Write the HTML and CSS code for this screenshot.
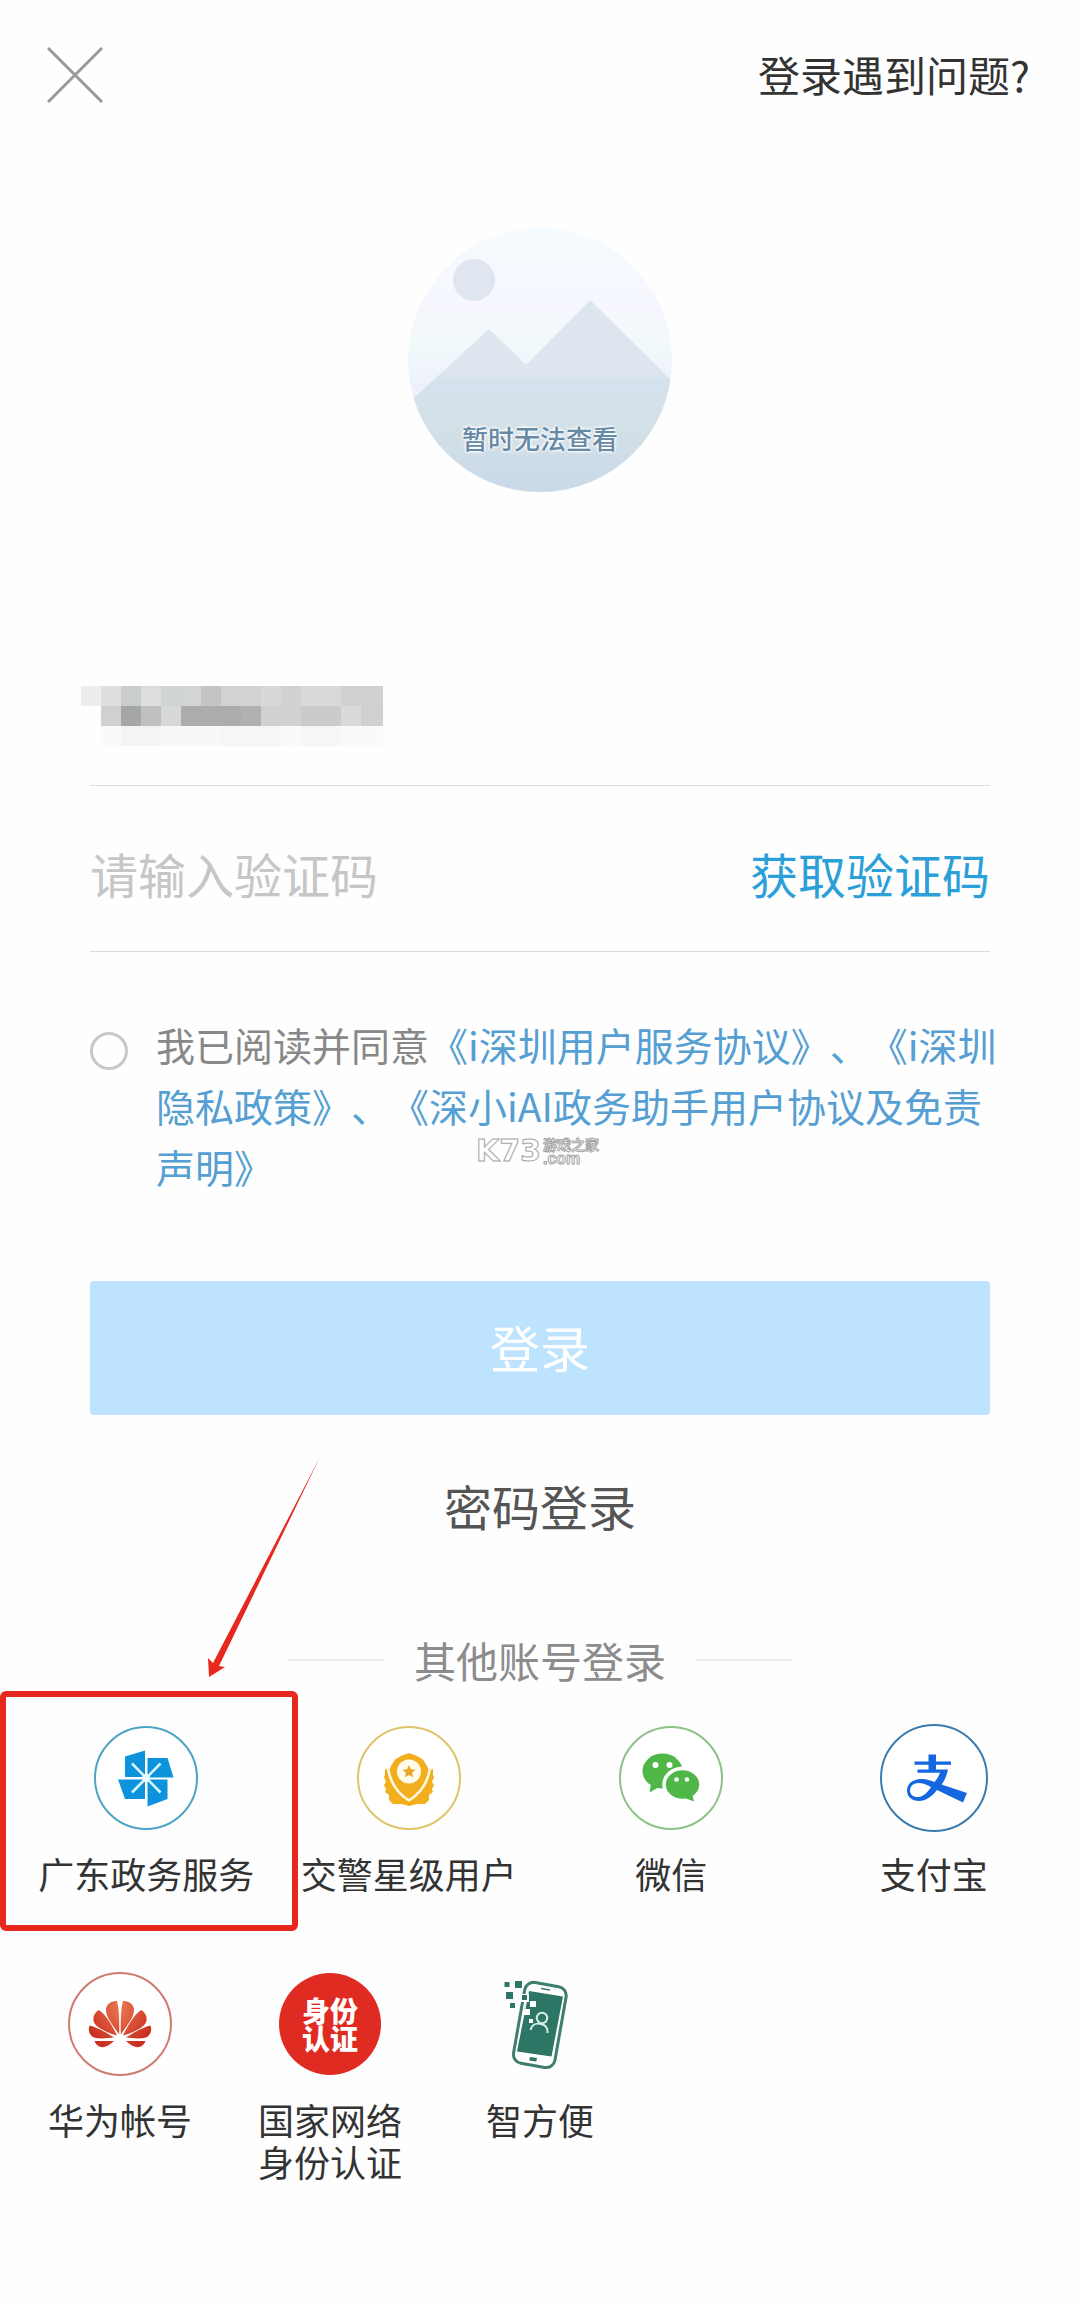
FILE: index.html
```html
<!DOCTYPE html>
<html lang="zh-CN">
<head>
    <meta charset="UTF-8">
    <meta name="viewport" content="width=device-width, initial-scale=1.0">
    <title>登录</title>
    <link rel="stylesheet" href="styles.css">
</head>
<body>
    <header class="topbar">
        <button type="button" class="close-btn" aria-label="关闭">
            <svg viewBox="0 0 56 56" fill="none" stroke="#999" stroke-width="3"><path d="M1 1l54 54M55 1L1 55"/></svg>
        </button>
        <a href="#" class="help-link">登录遇到问题?</a>
    </header>

    <!-- Avatar placeholder -->
    <div class="avatar">
        <svg viewBox="0 0 264 264">
            <defs>
                <clipPath id="avatarClip"><circle cx="132" cy="132" r="132"/></clipPath>
                <linearGradient id="sky" x1="0" y1="0" x2="0" y2="1">
                    <stop offset="0" stop-color="#f5fbff"/>
                    <stop offset="0.3" stop-color="#f6f7fe"/>
                    <stop offset="0.45" stop-color="#f1f9fa"/>
                    <stop offset="0.6" stop-color="#edf1fb"/>
                </linearGradient>
                <linearGradient id="hill" gradientUnits="userSpaceOnUse" x1="0" y1="70" x2="0" y2="264">
                    <stop offset="0" stop-color="#dde6ee"/>
                    <stop offset="0.38" stop-color="#dee5ef"/>
                    <stop offset="0.43" stop-color="#d5e2ee"/>
                    <stop offset="0.65" stop-color="#d3e0e7"/>
                    <stop offset="1" stop-color="#c9d9e8"/>
                </linearGradient>
            </defs>
            <g clip-path="url(#avatarClip)">
                <rect width="264" height="264" fill="url(#sky)"/>
                <circle cx="66" cy="52" r="21" fill="#dfe6f0"/>
                <path d="M0 174L7 169 81 101 118 137 182 72 262 151V264H0z" fill="url(#hill)"/>
            </g>
        </svg>
        <span class="avatar-text">暂时无法查看</span>
    </div>

    <form class="login-form">
        <div class="field phone-field">
            <!-- Masked phone number -->
            <svg class="phone-mask" viewBox="0 0 310 60" shape-rendering="crispEdges" role="img" aria-label="手机号">
                <g fill="#d7d8d8">
                    <rect x="0" y="0" width="20" height="20" fill="#ededed"/>
                    <rect x="20" y="0" width="20" height="20" fill="#dedede"/>
                    <rect x="40" y="0" width="20" height="20" fill="#c9cecd"/>
                    <rect x="60" y="0" width="20" height="20" fill="#dcdddd"/>
                    <rect x="80" y="0" width="20" height="20" fill="#d0d4d4"/>
                    <rect x="100" y="0" width="20" height="20" fill="#d3d5d5"/>
                    <rect x="120" y="0" width="20" height="20" fill="#c3c4c4"/>
                    <rect x="140" y="0" width="40" height="20" fill="#d1d2d2"/>
                    <rect x="180" y="0" width="20" height="20" fill="#d8d8d8"/>
                    <rect x="200" y="0" width="20" height="20" fill="#d0d1d1"/>
                    <rect x="220" y="0" width="40" height="20" fill="#d8d9d9"/>
                    <rect x="260" y="0" width="42" height="20" fill="#d1d1d1"/>
                    <rect x="20" y="20" width="20" height="20" fill="#cfd0d0"/>
                    <rect x="40" y="20" width="20" height="20" fill="#a5a7a4"/>
                    <rect x="60" y="20" width="20" height="20" fill="#bfc1c0"/>
                    <rect x="80" y="20" width="20" height="20"/>
                    <rect x="100" y="20" width="60" height="20" fill="#aaadab"/>
                    <rect x="160" y="20" width="20" height="20" fill="#afb2af"/>
                    <rect x="180" y="20" width="40" height="20" fill="#d0d1d1"/>
                    <rect x="220" y="20" width="40" height="20" fill="#cbcbcb"/>
                    <rect x="260" y="20" width="20" height="20" fill="#dadada"/>
                    <rect x="280" y="20" width="22" height="20" fill="#d0d0d0"/>
                    <rect x="20" y="40" width="20" height="20" fill="#fafafa"/>
                    <rect x="40" y="40" width="40" height="20" fill="#f3f4f3"/>
                    <rect x="80" y="40" width="60" height="20" fill="#f8f8f8"/>
                    <rect x="140" y="40" width="60" height="20" fill="#f6f6f6"/>
                    <rect x="200" y="40" width="20" height="20" fill="#fafafa"/>
                    <rect x="220" y="40" width="40" height="20" fill="#f6f6f6"/>
                    <rect x="260" y="40" width="42" height="20" fill="#fafafa"/>
                </g>
            </svg>
        </div>
        <div class="field code-field">
            <input type="text" class="code-input" placeholder="请输入验证码" aria-label="验证码">
            <button type="button" class="code-btn">获取验证码</button>
        </div>

        <div class="agreement">
            <input type="checkbox" id="agree" class="agree-check">
            <p class="agree-text"><label for="agree">我已阅读并同意</label><a href="#">《i深圳用户服务协议》</a>、<a href="#">《i深圳隐私政策》</a>、<a href="#">《深小iAI政务助手用户协议及免责声明》</a></p>
            <div class="watermark">
                <span class="wm-logo">K73</span>
                <span class="wm-site">游戏之家<br><span class="wm-com">.com</span></span>
            </div>
        </div>

        <button type="submit" class="login-btn">登录</button>
    </form>

    <a href="#" class="password-login">密码登录</a>

    <div class="divider"><span>其他账号登录</span></div>

    <nav class="accounts accounts-main">
        <a href="#" class="account highlighted">
            <svg class="account-icon" viewBox="0 0 108 108">
                <circle cx="54" cy="54" r="51" fill="#fff" stroke="#4da3c4" stroke-width="2"/>
                <g fill="#0c93dc">
                    <path d="M33 32.5L53 26.5V53H33z"/>
                    <path d="M55.500 34H75.500L81.500 53.500H55.500z"/>
                    <path d="M55.500 55.500H75.500V75L55.500 82.500z"/>
                    <path d="M26 55.500H53V75H33z"/>
                </g>
                <path d="M40 39.500L68.500 68.500M68.500 39.500L40 68.500" stroke="#d9f6ff" stroke-width="2.500"/>
                <circle cx="54" cy="54" r="4" fill="#e8fbff"/>
            </svg>
            <span>广东政务服务</span>
            <svg class="arrow" viewBox="0 0 125 225">
                <path d="M120 2L13 208 8 203 9 222 25 212 19 211z" fill="#e6281e"/>
            </svg>
        </a>
        <a href="#" class="account">
            <svg class="account-icon" viewBox="0 0 108 108">
                <circle cx="54" cy="54" r="51" fill="#fff" stroke="#dfc468" stroke-width="2"/>
                <path d="M54 29L61 31.500 68 35.500 72 42 74 46 78 45 78 51 79 53 77 58 79 61 77 65 78 68 74 71 74 76 70 80 62 80 54 82 46 80 38 80 34 76 34 71 30 68 31 65 29 61 31 58 29 53 30 51 30 45 34 46 36 42 40 35.500 47 31.500z" fill="#f2ae1c"/>
                <path d="M33 44C35 58 42 69 54 76.500 66 69 73 58 75 44" fill="none" stroke="#fff8e0" stroke-width="2.600"/>
                <circle cx="54" cy="47.500" r="12" fill="#fffbea"/>
                <path d="M54 41l1.900 4.200 4.600.5-3.400 3.100.9 4.500-4-2.300-4 2.300.9-4.500-3.400-3.100 4.600-.5z" fill="#e8a52a"/>
            </svg>
            <span>交警星级用户</span>
        </a>
        <a href="#" class="account">
            <svg class="account-icon" viewBox="0 0 108 108">
                <circle cx="54" cy="54" r="51" fill="#fff" stroke="#8dc287" stroke-width="2"/>
                <g fill="#4fb748">
                    <ellipse cx="45.500" cy="47" rx="20" ry="17.500"/>
                    <path d="M34 60L32.500 68.500 42 63z"/>
                    <ellipse cx="65.500" cy="60.500" rx="18.500" ry="16" stroke="#fff" stroke-width="3.500"/>
                    <path d="M68 74L77 77.500 75 70z"/>
                </g>
                <g fill="#fff">
                    <circle cx="38.500" cy="41" r="3"/>
                    <circle cx="52.500" cy="41" r="3"/>
                    <circle cx="59.500" cy="55.500" r="2.300"/>
                    <circle cx="70" cy="55.500" r="2.300"/>
                </g>
            </svg>
            <span>微信</span>
        </a>
        <a href="#" class="account">
            <svg class="account-icon" viewBox="0 0 108 108">
                <circle cx="54" cy="54" r="53" fill="#fff" stroke="#3b7cb0" stroke-width="2"/>
                <g fill="#1567e0">
                    <path d="M48.500 30.500H56V37.500H71V40.800H56V45.500H68C66.500 52.500 64 57.500 61.500 60.500L87 69 83 78.500 57 66C51 73.500 45 77 39.500 77 31.500 77 27 72.500 27 66.500 27 60 32.500 55 41 55 46 55 51.500 56.500 54.500 58 57 55 59 52 60 48.800H37.500V45.500H48.500V40.800H34.500V37.500H48.500z"/>
                    <path d="M51 63C46 60.500 42.500 59 39 59 33.500 59 30 62 30 66.500 30 70.500 33.500 73.500 38.500 73 43.500 72.500 47.500 68.500 51 63z" fill="#fff"/>
                </g>
            </svg>
            <span>支付宝</span>
        </a>
    </nav>

    <nav class="accounts accounts-more">
        <a href="#" class="account">
            <svg class="account-icon" viewBox="0 0 108 108">
                <defs>
                    <radialGradient id="petal" gradientUnits="userSpaceOnUse" cx="58" cy="38" r="40">
                        <stop offset="0" stop-color="#ef7f55"/>
                        <stop offset="1" stop-color="#c9301f"/>
                    </radialGradient>
                    <g id="petals">
                        <path d="M53.200 64.500C53.500 50 53 38 51 31 44 31 40 35 40 40 40 47 46 54 53.200 64.500z"/>
                        <path d="M51 65.500C46 55 40 45 33 40 27 43 26 50 29 54 33 59 42 63 51 65.500z"/>
                        <path d="M48 67.500C40 62 30 57 23.500 55.500 21.500 61 24 67 30 68 36 69 42 68 48 67.500z"/>
                        <path d="M48 71H28.500C30 75 34 78 38 77 42 76 45 74 48 71z"/>
                    </g>
                </defs>
                <circle cx="54" cy="54" r="51" fill="#fff" stroke="#cf7a6c" stroke-width="2"/>
                <g fill="url(#petal)">
                    <use href="#petals"/>
                    <use href="#petals" transform="matrix(-1 0 0 1 108 0)"/>
                </g>
            </svg>
            <span>华为帐号</span>
        </a>
        <a href="#" class="account">
            <svg class="account-icon" viewBox="0 0 108 108">
                <circle cx="54" cy="54" r="51" fill="#df2b22"/>
                <g class="id-text" fill="#fff" text-anchor="middle">
                    <text x="54" y="52">身份</text>
                    <text x="54" y="80">认证</text>
                </g>
            </svg>
            <span>国家网络<br>身份认证</span>
        </a>
        <a href="#" class="account">
            <svg class="account-icon" viewBox="0 0 108 108" fill="#2d7565">
                <rect x="33" y="14" width="42" height="82" rx="9" fill="#fff" stroke="#3f7d6f" stroke-width="3" transform="rotate(10 54 54)"/>
                <path d="M43 21L77 26.500 65.500 86.500 31 81.500z"/>
                <path d="M55 18.500l9 1.500" stroke="#3f7d6f" stroke-width="1.500"/>
                <path d="M44 87l7 1-.7 3.500-7-1z"/>
                <g fill="none" stroke="#d5efe8" stroke-width="2">
                    <circle cx="56" cy="48" r="5.200"/>
                    <path d="M44.500 60C46 54 51 53 55 54 60 55 62 58 61.500 63"/>
                </g>
                <path d="M35 24h8v8h-8zM38 39h6v6h-6zM44 31h6v6h-6zM43 49h4v4h-4z" fill="#fff"/>
                <path d="M18.500 12h5v5h-5zM29 11h7v7h-7zM20 22h7v7h-7zM24 33h5v5h-5zM36 25h5v5h-5z"/>
            </svg>
            <span>智方便</span>
        </a>
    </nav>
</body>
</html>
```

FILE: styles.css
```css
* {
    box-sizing: border-box;
}
body {
    margin: 0;
    background-color: #fefefe;
    color: #333;
    font-family: "Noto Sans CJK SC", sans-serif;
}
a {
    color: inherit;
    text-decoration: none;
}
button {
    padding: 0;
    border: none;
    background: none;
    font-family: inherit;
    cursor: pointer;
}
svg {
    display: block;
}
.topbar {
    display: flex;
    justify-content: space-between;
    align-items: flex-start;
    padding: 47px 50px 0 47px;
}
.close-btn svg {
    width: 56px;
    height: 56px;
}
.help-link {
    font-size: 42px;
    line-height: 54px;
}
.avatar {
    position: relative;
    width: 264px;
    margin: 125px auto 0;
}
.avatar-text {
    position: absolute;
    left: 0;
    right: 0;
    bottom: 34px;
    text-align: center;
    font-size: 26px;
    line-height: 40px;
    font-weight: 500;
    color: #6689a6;
    text-shadow: 0 0 2px #fff, 0 0 2px #fff, 0 0 3px #fff, 0 0 4px #fff;
}
.login-form {
    margin: 128px 90px 0;
}
.field {
    display: flex;
    height: 166px;
    border-bottom: 1px solid #dcdcdc;
}
.phone-field {
    align-items: flex-end;
    padding-bottom: 39px;
}
.phone-mask {
    width: 310px;
    height: 60px;
    margin-left: -9px;
}
.code-field {
    align-items: center;
    justify-content: space-between;
    padding-top: 8px;
}
.code-input {
    flex: 1;
    min-width: 0;
    padding: 0;
    border: none;
    outline: none;
    background: none;
    font-family: inherit;
    font-size: 48px;
    color: #333;
}
.code-input::placeholder {
    color: #c6c6c6;
}
.code-btn {
    font-size: 48px;
    color: #2b9fd8;
}
.agreement {
    position: relative;
    display: flex;
    align-items: flex-start;
    gap: 28px;
    margin: 62px -14px 0 0;
}
.agree-check {
    appearance: none;
    flex: none;
    width: 38px;
    height: 38px;
    margin: 18px 0 0;
    border: 3px solid #c8c8c8;
    border-radius: 50%;
}
.agree-check:checked {
    border-width: 12px;
    border-color: #2b9fd8;
}
.agree-text {
    margin: 0;
    font-size: 39px;
    line-height: 61px;
    color: #559fd3;
    text-spacing-trim: space-all;
}
.agree-text label {
    color: #888;
}
.watermark {
    position: absolute;
    left: 386px;
    top: 121px;
    display: flex;
    align-items: center;
    gap: 2px;
    color: #fff;
    -webkit-text-stroke: 1px #a5a5a5;
}
.wm-logo {
    font-family: "DejaVu Sans", sans-serif;
    font-size: 30px;
    font-weight: bold;
    line-height: 32px;
}
.wm-site {
    font-size: 14px;
    font-weight: bold;
    line-height: 14px;
}
.wm-com {
    font-family: "Liberation Sans", sans-serif;
    font-size: 16px;
}
.login-btn {
    display: block;
    width: 100%;
    height: 134px;
    margin-top: 84px;
    padding-bottom: 4px;
    border-radius: 4px;
    background-color: #bee3fe;
    color: #fff;
    font-size: 50px;
}
.password-login {
    display: block;
    width: fit-content;
    margin: 60px auto 0;
    font-size: 48px;
    line-height: 60px;
    color: #555;
}
.divider {
    display: flex;
    justify-content: center;
    align-items: center;
    gap: 30px;
    margin-top: 95px;
    font-size: 42px;
    line-height: 60px;
    color: #8c8c8c;
}
.divider::before,
.divider::after {
    content: "";
    width: 96px;
    height: 2px;
    background-color: #ececec;
}
.accounts {
    display: grid;
    padding: 0 15px;
}
.accounts-main {
    grid-template-columns: repeat(4, 1fr);
    margin-top: 34px;
}
.accounts-more {
    grid-template-columns: repeat(5, 1fr);
    margin-top: 76px;
}
.account {
    position: relative;
    display: flex;
    flex-direction: column;
    align-items: center;
    gap: 20px;
    font-size: 36px;
    line-height: 42px;
    white-space: nowrap;
}
.account-icon {
    width: 108px;
    height: 108px;
}
.id-text {
    font-size: 28px;
    font-weight: 900;
}
/* red frame and arrow around the first entry */
.highlighted::before {
    content: "";
    position: absolute;
    top: -33px;
    right: -20px;
    bottom: -37px;
    left: -15px;
    border: 6px solid #e6281e;
    border-radius: 6px;
}
.arrow {
    position: absolute;
    left: 185px;
    top: -269px;
    width: 125px;
    height: 225px;
}
```
